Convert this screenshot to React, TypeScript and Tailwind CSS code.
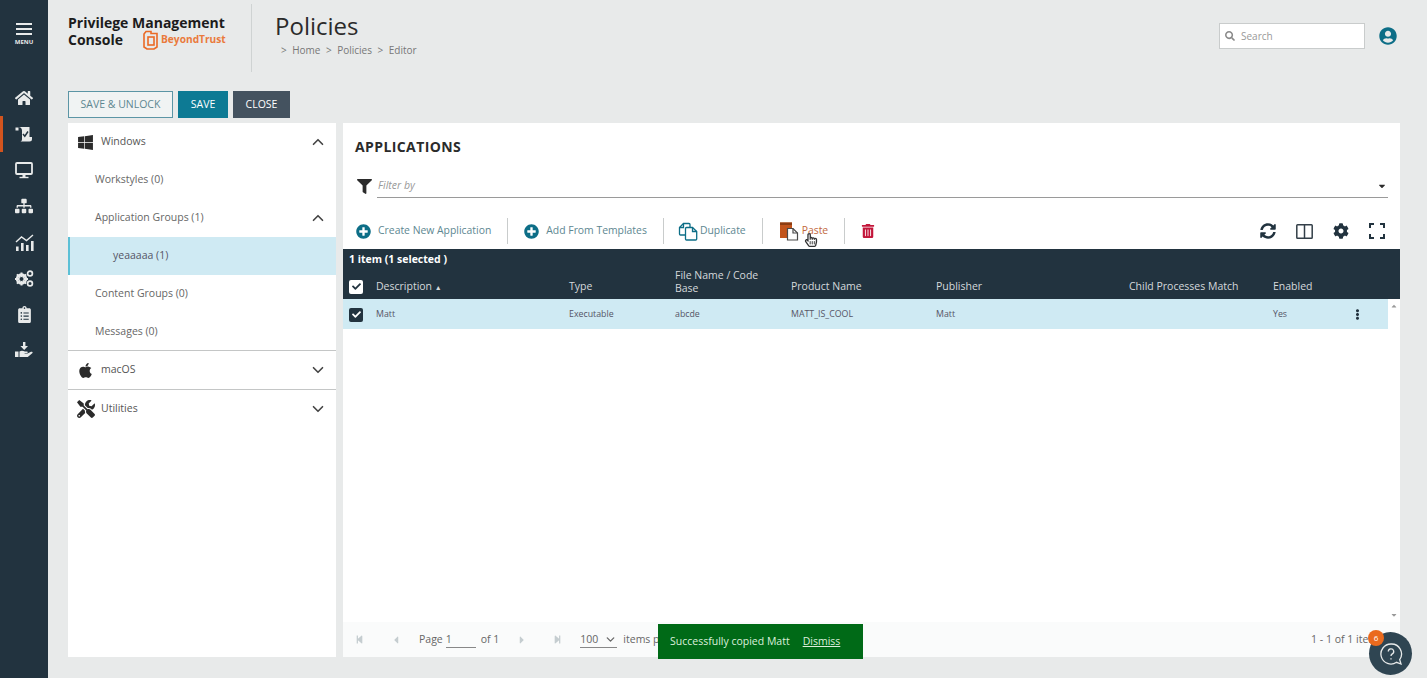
import { ChevronDown, ChevronUp } from "lucide-react";
import {
  FaApple,
  FaCaretLeft,
  FaCaretRight,
  FaCaretDown,
  FaCaretUp,
  FaCheck,
  FaCog,
  FaClipboardList,
  FaEllipsisV,
  FaFilter,
  FaHandPointer,
  FaHome,
  FaPlusCircle,
  FaRegHandPointer,
  FaSearch,
  FaSitemap,
  FaStepBackward,
  FaStepForward,
  FaSyncAlt,
  FaTools,
  FaTrashAlt,
  FaUserCircle,
  FaWindows,
} from "react-icons/fa";

const GRID =
  "grid grid-cols-[27px_193px_106px_116px_145px_193px_144px_1fr] pl-[6px] items-center";

function PolicyIcon() {
  return (
    <svg width="18" height="16" viewBox="0 0 18 16" fill="none">
      <path d="M3 1h11.500v10H17v2a2.500 2.500 0 0 1-2.500 2.500H5.500a2 2 0 0 0 1.500-2V4.500a3.500 3.500 0 0 0-4-3.500z" fill="#e8eaea" />
      <path d="M0.500 1.500H3.500V4.500H0.500z" fill="#e8eaea" />
      <path d="M8 8l1.800 2.200L13 5.500" stroke="#22333f" strokeWidth="1.500" />
    </svg>
  );
}

function MonitorIcon() {
  return (
    <svg width="18" height="17" viewBox="0 0 18 17" fill="none">
      <rect x="1" y="1" width="16" height="11" rx="1" stroke="#e8eaea" strokeWidth="1.800" />
      <path d="M7.500 12.500h3V15h-3z" fill="#e8eaea" />
      <path d="M4.500 15.500h9" stroke="#e8eaea" strokeWidth="1.400" />
    </svg>
  );
}

function ChartIcon() {
  return (
    <svg width="19" height="17" viewBox="0 0 19 17" fill="#e8eaea">
      <rect x="1" y="12.500" width="2.600" height="4.500" />
      <rect x="6" y="9" width="2.600" height="8" />
      <rect x="11" y="11" width="2.600" height="6" />
      <rect x="16" y="7" width="2.600" height="10" />
      <path d="M1 8l5.500-5 5 3.500L18 1" stroke="#e8eaea" strokeWidth="1.400" fill="none" />
    </svg>
  );
}

function GearsIcon() {
  return (
    <svg width="20" height="17" viewBox="0 0 20 17" fill="none">
      <circle cx="7.500" cy="9" r="4.400" stroke="#e8eaea" strokeWidth="2.600" />
      <path
        d="M7.500 2.500v13M1 9h13M2.900 4.400l9.200 9.200M12.100 4.400l-9.200 9.200"
        stroke="#e8eaea"
        strokeWidth="2"
      />
      <circle cx="7.500" cy="9" r="2" fill="#22333f" />
      <circle cx="16" cy="3.500" r="2.400" stroke="#e8eaea" strokeWidth="1.700" />
      <circle cx="16" cy="13.500" r="2.400" stroke="#e8eaea" strokeWidth="1.700" />
    </svg>
  );
}

function HandIcon() {
  return (
    <svg width="18" height="16" viewBox="0 0 18 16" fill="#e8eaea">
      <path d="M8 0h2.400v4H13L9.200 8 5.400 4H8z" />
      <rect x="0" y="9.500" width="3.500" height="5.500" />
      <path d="M4.500 9.500c2-1.200 3.500-.8 5.500 0h2c1 0 1 1.600 0 1.600H9.500l.2.500h2.800L16 9.800c1.300-.6 2.200.7 1.200 1.500L12.800 15H4.500z" />
    </svg>
  );
}

function CopyIcon() {
  return (
    <svg width="20" height="19" viewBox="0 0 20 19" fill="none" stroke="#0d6e87" strokeWidth="1.300" className="-ml-[2px]">
      <path d="M7 13H2.500a1 1 0 0 1-1-1V5.500l4-4H11a1 1 0 0 1 1 1V5.500" />
      <path d="M1.500 5.500h4v-4" />
      <path d="M8.500 5.500h6l4.200 4V17a1 1 0 0 1-1 1H8.500a1 1 0 0 1-1-1V6.500a1 1 0 0 1 1-1z" />
      <path d="M14.500 5.500v4h4.200" />
    </svg>
  );
}

function PasteIcon() {
  return (
    <svg width="20" height="20" viewBox="0 0 20 20">
      <path d="M1 1.500h12V7H8v10H1z" fill="#c2541b" />
      <path d="M1 1.500h12v2.500H1z" fill="#8c3c12" />
      <path d="M8.500 7.500h5.500l4.500 4.500v7H8.500z" fill="#fff" stroke="#4a4a4a" strokeWidth="1.200" />
      <path d="M14 7.500V12h4.500" fill="none" stroke="#4a4a4a" strokeWidth="1.200" />
    </svg>
  );
}

function ColumnsIcon() {
  return (
    <svg width="17" height="15" viewBox="0 0 17 15" fill="none" stroke="#333f48" strokeWidth="1.500">
      <rect x="0.800" y="0.800" width="15.400" height="13.400" rx="0.800" />
      <path d="M8.500 1v13" />
    </svg>
  );
}

function ExpandIcon() {
  return (
    <svg width="16" height="16" viewBox="0 0 16 16" fill="none" stroke="#22333f" strokeWidth="2">
      <path d="M1 5V1h4M11 1h4v4M15 11v4h-4M5 15H1v-4" />
    </svg>
  );
}

function HelpIcon() {
  return (
    <svg width="24" height="24" viewBox="0 0 24 24" fill="none" stroke="#e8eaea" strokeWidth="1.300">
      <path d="M12 2a10 10 0 1 0 5.500 18.300L22 22l-1.300-4.300A10 10 0 0 0 12 2z" />
      <path d="M9.300 9.500a2.700 2.700 0 1 1 4 2.400c-.9.500-1.300 1-1.300 2" />
      <path d="M12 16.300v1.200" />
    </svg>
  );
}

function LogoMark() {
  return (
    <svg width="16" height="20" viewBox="0 0 16 20" fill="none" stroke="#ea6a26" strokeWidth="1.600">
      <path d="M3 1.500h5v2h6V17l-3 2H4l-3-2V4z" />
      <rect x="5" y="7" width="6" height="8" />
    </svg>
  );
}

function Checkbox({ dark }: { dark?: boolean }) {
  return (
    <span
      className={`flex h-[14px] w-[14px] items-center justify-center rounded-[2px] ${
        dark ? "bg-[#22333f] text-white" : "bg-white text-[#22333f]"
      }`}
    >
      <FaCheck size={9} />
    </span>
  );
}

function SidebarItem({ children, active }: { children: React.ReactNode; active?: boolean }) {
  return (
    <div
      className={`flex h-[36px] items-center justify-center text-[#e8eaea] ${
        active ? "border-l-[3px] border-[#d2541e] pr-[3px]" : ""
      }`}
    >
      {children}
    </div>
  );
}

function Sidebar() {
  return (
    <div className="flex w-[48px] shrink-0 flex-col bg-[#22333f]">
      <div className="flex h-[80px] flex-col items-center pt-[23px] text-[#e8eaea]">
        <div className="flex w-[16px] flex-col gap-[3px]">
          <div className="h-[2px] bg-[#e8eaea]" />
          <div className="h-[2px] bg-[#e8eaea]" />
          <div className="h-[2px] bg-[#e8eaea]" />
        </div>
        <span className="mt-[3px] text-[6px] leading-[8px] font-bold">MENU</span>
      </div>
      <SidebarItem>
        <FaHome size={18} />
      </SidebarItem>
      <SidebarItem active>
        <PolicyIcon />
      </SidebarItem>
      <SidebarItem>
        <MonitorIcon />
      </SidebarItem>
      <SidebarItem>
        <FaSitemap size={18} />
      </SidebarItem>
      <SidebarItem>
        <ChartIcon />
      </SidebarItem>
      <SidebarItem>
        <GearsIcon />
      </SidebarItem>
      <SidebarItem>
        <FaClipboardList size={17} />
      </SidebarItem>
      <SidebarItem>
        <HandIcon />
      </SidebarItem>
    </div>
  );
}

function Header() {
  return (
    <div className="flex h-[91px] shrink-0 pl-[20px] pr-[30px]">
      <div className="w-[183px] pt-[14px] text-[14px] leading-[17px] font-bold text-[#1c1c1c]">
        <div>Privilege Management</div>
        <div className="flex h-[17px] items-center">
          Console
          <span className="ml-[20px] flex items-center gap-[2px] text-[10.200px] font-bold text-[#ea7a3c]">
            <LogoMark />
            BeyondTrust
          </span>
        </div>
      </div>
      <div className="mt-[4px] h-[68px] w-px bg-[#cfd3d3]" />
      <div className="pl-[23px] pt-[9px]">
        <div className="text-[24px] leading-[34px] text-[#2b2b2b]">Policies</div>
        <div className="flex items-center gap-[5.500px] pl-[6px] text-[10px] leading-[14px] text-[#777]">
          <span>&gt;</span>
          <span>Home</span>
          <span>&gt;</span>
          <span>Policies</span>
          <span>&gt;</span>
          <span>Editor</span>
        </div>
      </div>
      <div className="ml-auto flex h-[72px] items-center gap-[14px]">
        <div className="flex h-[26px] w-[146px] items-center gap-[6px] border border-[#c9cccc] bg-white pl-[5px] text-[10px] text-[#999]">
          <FaSearch size={10} className="text-[#8a8a8a]" />
          Search
        </div>
        <FaUserCircle size={18} className="text-[#0d6e87]" />
      </div>
    </div>
  );
}

function NavRow({
  label,
  open,
  icon,
  rowClass,
}: {
  label: string;
  open?: boolean;
  icon: React.ReactNode;
  rowClass: string;
}) {
  return (
    <div className={`flex items-center pr-[9px] text-[10.500px] text-[#555] ${rowClass}`}>
      <div className="flex w-[33px] justify-center pl-[2px] text-[#2b2b2b]">{icon}</div>
      <span>{label}</span>
      <div className="ml-auto text-[#444]">
        {open ? <ChevronUp size={18} strokeWidth={2.2} /> : <ChevronDown size={18} strokeWidth={2.2} />}
      </div>
    </div>
  );
}

function SubRow({ label, chevron }: { label: string; chevron?: boolean }) {
  return (
    <div className="flex h-[38px] items-center pl-[27px] pr-[9px] text-[10.500px] text-[#666]">
      <span>{label}</span>
      {chevron && <ChevronUp size={18} strokeWidth={2.2} className="ml-auto text-[#444]" />}
    </div>
  );
}

function LeftPanel() {
  return (
    <div className="w-[268px] shrink-0 bg-white">
      <NavRow label="Windows" open rowClass="h-[38px]" icon={<FaWindows size={17} />} />
      <SubRow label="Workstyles (0)" />
      <SubRow label="Application Groups (1)" chevron />
      <div className="flex h-[38px] items-center border-l-2 border-[#5cc0d6] bg-[#cfeaf3] pl-[43px] text-[10.500px] text-[#556]">
        yeaaaaa (1)
      </div>
      <SubRow label="Content Groups (0)" />
      <SubRow label="Messages (0)" />
      <NavRow
        label="macOS"
        rowClass="-mt-px h-[39px] border-t border-[#c4c6c6]"
        icon={<FaApple size={17} />}
      />
      <NavRow
        label="Utilities"
        rowClass="h-[38px] border-t border-[#c4c6c6]"
        icon={<FaTools size={18} />}
      />
    </div>
  );
}

function Divider() {
  return <div className="mx-[16px] h-[26px] w-px bg-[#c9cccc]" />;
}

function Toolbar() {
  return (
    <div className="flex h-[36px] items-center pl-[13px] pr-[15px] text-[10.400px] text-[#5d8791]">
      <FaPlusCircle size={15} className="mr-[7px] text-[#0d6e87]" />
      Create New Application
      <Divider />
      <FaPlusCircle size={15} className="mr-[7px] text-[#0d6e87]" />
      Add From Templates
      <Divider />
      <CopyIcon />
      <span className="ml-[2px]">Duplicate</span>
      <Divider />
      <div className="relative flex items-center text-[#c2683c]">
        <PasteIcon />
        <span className="ml-[3px]">Paste</span>
        <FaHandPointer size={14} className="absolute left-[25px] top-[12px] text-white" />
        <FaRegHandPointer size={14} className="absolute left-[25px] top-[12px] text-[#333]" />
      </div>
      <Divider />
      <FaTrashAlt size={14} className="text-[#c3163a]" />
      <div className="ml-auto flex items-center gap-[20px] text-[#22333f]">
        <FaSyncAlt size={16} />
        <ColumnsIcon />
        <FaCog size={16} />
        <ExpandIcon />
      </div>
    </div>
  );
}

function Table() {
  return (
    <>
      <div className="bg-[#22333f] text-white">
        <div className="pl-[6px] pt-[3px] text-[10.500px] leading-[14px] font-bold">1 item (1 selected )</div>
        <div className={`${GRID} h-[33px] text-[10.500px] leading-[13px] text-[#d5d9dc]`}>
          <div className="mt-[8px]">
            <Checkbox />
          </div>
          <span className="mt-[8px]">
            Description <span className="text-[7px]">▲</span>
          </span>
          <span className="mt-[8px]">Type</span>
          <span className="-mt-[2px]">
            File Name / Code
            <br />
            Base
          </span>
          <span className="mt-[8px]">Product Name</span>
          <span className="mt-[8px]">Publisher</span>
          <span className="mt-[8px]">Child Processes Match</span>
          <span className="mt-[8px]">Enabled</span>
        </div>
      </div>
      <div className="flex min-h-0 flex-1">
        <div className="flex-1">
          <div className={`${GRID} h-[30px] bg-[#cfeaf3] pt-px text-[8.800px] text-[#556]`}>
            <Checkbox dark />
            <span>Matt</span>
            <span>Executable</span>
            <span>abcde</span>
            <span>MATT_IS_COOL</span>
            <span>Matt</span>
            <span />
            <div className="flex items-center justify-between pr-[25px]">
              <span>Yes</span>
              <FaEllipsisV size={11} className="text-[#22333f]" />
            </div>
          </div>
        </div>
        <div className="flex w-[12px] flex-col items-center justify-between bg-white py-[3px] text-[#9a9a9a]">
          <FaCaretUp size={8} />
          <FaCaretDown size={8} />
        </div>
      </div>
    </>
  );
}

function Pager() {
  return (
    <div className="flex h-[35px] shrink-0 items-center bg-[#fafbfb] pl-[12px] pr-[17px] text-[10.500px] text-[#666]">
      <FaStepBackward size={9} className="text-[#c5cdd0]" />
      <FaCaretLeft size={12} className="ml-[26px] text-[#c5cdd0]" />
      <span className="ml-[17px]">Page</span>
      <span className="ml-[3px] w-[30px] border-b border-[#888] leading-[16px]">1</span>
      <span className="ml-[5px]">of 1</span>
      <FaCaretRight size={12} className="ml-[17px] text-[#c5cdd0]" />
      <FaStepForward size={9} className="ml-[25px] text-[#c5cdd0]" />
      <span className="ml-[18px] flex w-[37px] items-center justify-between border-b border-[#888] leading-[16px]">
        100
        <ChevronDown size={13} strokeWidth={2.4} />
      </span>
      <span className="ml-[6px]">items per page</span>
      <span className="ml-auto">1 - 1 of 1 items</span>
    </div>
  );
}

function MainPanel() {
  return (
    <div className="flex min-w-0 flex-1 flex-col bg-white">
      <div className="pl-[12px] pt-[14px] text-[14px] leading-[19px] font-bold tracking-[0.4px] text-[#2b2b2b]">
        APPLICATIONS
      </div>
      <div className="mt-[18px] flex h-[24px] items-center pl-[14px] pr-[12px]">
        <FaFilter size={15} className="text-[#2b2b2b]" />
        <div className="ml-[5px] flex h-[24px] flex-1 items-center justify-between border-b border-[#9a9a9a] pl-[1px] text-[10.500px] italic text-[#999]">
          Filter by
          <FaCaretDown size={10} className="mr-[1px] text-[#2b2b2b]" />
        </div>
      </div>
      <div className="mt-[15px]">
        <Toolbar />
      </div>
      <Table />
      <Pager />
    </div>
  );
}

export default function App() {
  return (
    <div className="relative flex h-[678px] w-[1427px] overflow-hidden bg-[#e8eaea] font-['Open_Sans',sans-serif]">
      <Sidebar />
      <div className="flex min-w-0 flex-1 flex-col">
        <Header />
        <div className="flex h-[27px] shrink-0 gap-[5px] pl-[20px] text-[10.500px]">
          <div className="flex w-[105px] items-center justify-center border border-[#5b95a5] bg-[#f0f3f3] text-[#5d8791]">
            SAVE &amp; UNLOCK
          </div>
          <div className="flex w-[50px] items-center justify-center bg-[#0d7a94] text-white">SAVE</div>
          <div className="flex w-[57px] items-center justify-center bg-[#44525f] text-white">CLOSE</div>
        </div>
        <div className="mt-[5px] mb-[21px] flex min-h-0 flex-1 gap-[7px] pl-[20px] pr-[27px]">
          <LeftPanel />
          <MainPanel />
        </div>
      </div>
      <div className="absolute left-[658px] top-[624px] flex h-[35px] w-[205px] items-center gap-[13px] bg-[#006a17] pl-[12px] text-[10.500px] text-[#dcefdc]">
        Successfully copied Matt
        <span className="underline">Dismiss</span>
      </div>
      <div className="absolute left-[1369px] top-[632px] flex h-[43px] w-[43px] items-center justify-center rounded-full bg-[#2f4552]">
        <HelpIcon />
      </div>
      <div className="absolute left-[1368px] top-[630px] flex h-[16px] w-[16px] items-center justify-center rounded-full bg-[#ea6a1e] text-[8px] text-white">
        6
      </div>
    </div>
  );
}
